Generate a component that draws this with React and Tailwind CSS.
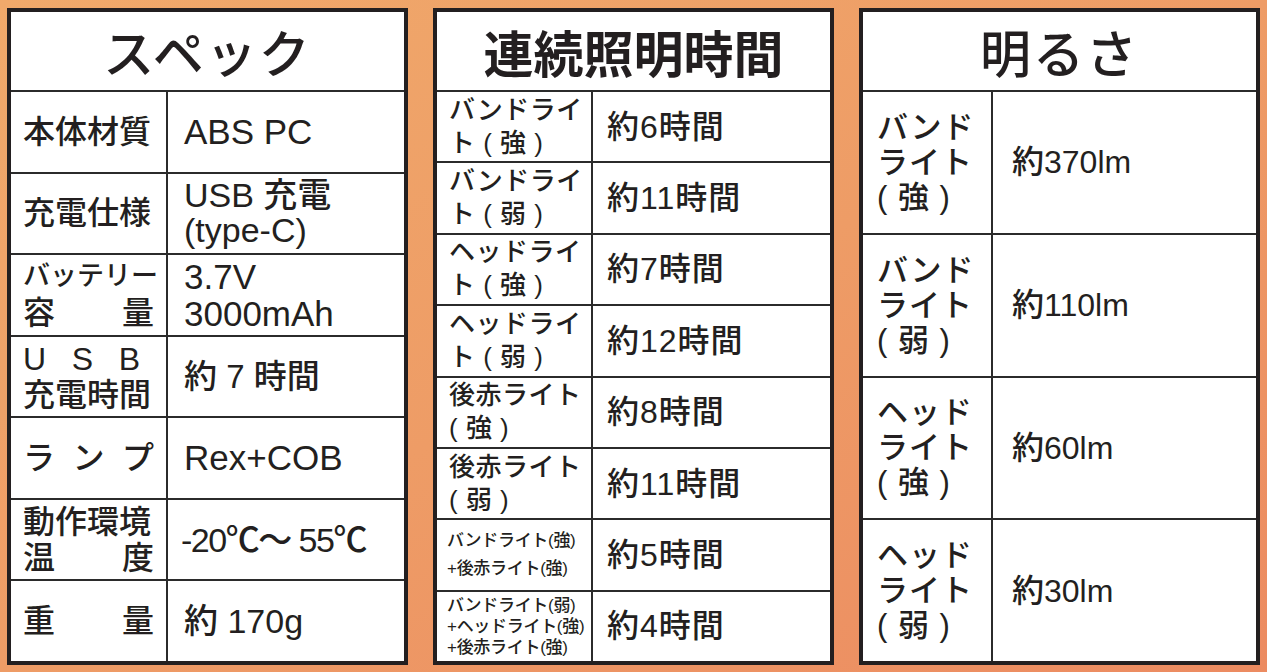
import React from 'react';

const ink = 'text-[#231f20]';
const font = "font-['Liberation_Sans','Noto_Sans_CJK_JP',sans-serif]";

// spreads each character over the full line width
const Spread = ({ text, className = '' }) => (
    <div className={`flex justify-between ${className}`}>
        {text.split('').map((c, i) => (
            <span key={i}>{c}</span>
        ))}
    </div>
);

const Table = ({ title, titleClass, children }) => (
    <div className="flex-1 flex flex-col border-4 border-[#231f20] bg-white">
        <div className={`h-[80px] shrink-0 flex items-center justify-center border-b-2 border-[#2b2b2b] font-['Noto_Sans_CJK_JP',sans-serif] ${titleClass}`}>
            {title}
        </div>
        <div className="flex-1 flex flex-col divide-y-2 divide-[#2b2b2b]">{children}</div>
    </div>
);

const Row = ({ labelW, label, value, valuePad = 'pl-4' }) => (
    <div className="flex flex-1 basis-0 min-h-0">
        <div className={`${labelW} shrink-0 border-r-2 border-[#2b2b2b] flex flex-col justify-center`}>{label}</div>
        <div className={`flex-1 flex flex-col justify-center ${valuePad}`}>{value}</div>
    </div>
);

const specRows = [
    {
        label: <div className="px-[12px] text-[32px] leading-[36px]">本体材質</div>,
        value: <div className="text-[35px] leading-[36px]">ABS PC</div>,
    },
    {
        label: <div className="px-[12px] text-[32px] leading-[36px]">充電仕様</div>,
        value: (
            <div className="text-[34px] leading-[35px]">
                <div>USB 充電</div>
                <div>(type-C)</div>
            </div>
        ),
    },
    {
        label: (
            <div className="px-[12px] leading-[37px]">
                <Spread text="バッテリー" className="text-[27px]" />
                <Spread text="容量" className="text-[32px]" />
            </div>
        ),
        value: (
            <div className="text-[35px] leading-[37px]">
                <div>3.7V</div>
                <div>3000mAh</div>
            </div>
        ),
    },
    {
        label: (
            <div className="px-[12px] leading-[36px]">
                <Spread text="USB" className="text-[32px] pr-[14px]" />
                <div className="text-[32px]">充電時間</div>
            </div>
        ),
        value: <div className="text-[33px] leading-[36px]">約 7 時間</div>,
    },
    {
        label: (
            <div className="px-[12px]">
                <Spread text="ランプ" className="text-[32px] leading-[36px]" />
            </div>
        ),
        value: <div className="text-[35px] leading-[36px]">Rex+COB</div>,
    },
    {
        label: (
            <div className="px-[12px] leading-[36px] text-[32px]">
                <div>動作環境</div>
                <Spread text="温度" />
            </div>
        ),
        value: <div className="text-[34px] leading-[36px] whitespace-nowrap tracking-[-1.5px] -ml-[3px]">-20℃～ 55℃</div>,
    },
    {
        label: (
            <div className="px-[12px]">
                <Spread text="重量" className="text-[32px] leading-[36px]" />
            </div>
        ),
        value: <div className="text-[34px] leading-[36px]">約 170g</div>,
    },
];

const timeRows = [
    { l: ['バンドライ', 'ト ( 強 )'], v: '約6時間' },
    { l: ['バンドライ', 'ト ( 弱 )'], v: '約11時間' },
    { l: ['ヘッドライ', 'ト ( 強 )'], v: '約7時間' },
    { l: ['ヘッドライ', 'ト ( 弱 )'], v: '約12時間' },
    { l: ['後赤ライト', '( 強 )'], v: '約8時間' },
    { l: ['後赤ライト', '( 弱 )'], v: '約11時間' },
    { l: ['バンドライト(強)', '+後赤ライト(強)'], v: '約5時間', small: 'leading-[28px]' },
    { l: ['バンドライト(弱)', '+ヘッドライト(強)', '+後赤ライト(強)'], v: '約4時間', small: 'leading-[21px]' },
];

const lumenRows = [
    { l: ['バンド', 'ライト', '( 強 )'], v: '約370lm' },
    { l: ['バンド', 'ライト', '( 弱 )'], v: '約110lm' },
    { l: ['ヘッド', 'ライト', '( 強 )'], v: '約60lm' },
    { l: ['ヘッド', 'ライト', '( 弱 )'], v: '約30lm' },
];

const App = () => {
    return (
        <div className={`w-full h-[672px] flex gap-[25px] px-[7px] pt-[8px] pb-[7px] bg-gradient-to-br from-[#f0a96b] via-[#ee9c66] to-[#ec8b61] font-medium ${font} ${ink}`}>
            {/* Spec */}
            <Table title="スペック" titleClass="text-[51px] font-medium tracking-[2px]">
                {specRows.map((r, i) => (
                    <Row key={i} labelW="w-[157px]" label={r.label} value={r.value} />
                ))}
            </Table>

            {/* Continuous lighting time */}
            <Table title="連続照明時間" titleClass="text-[50px] font-bold">
                {timeRows.map((r, i) => (
                    <Row
                        key={i}
                        labelW="w-[156px]"
                        valuePad="pl-[14px]"
                        label={
                            r.small ? (
                                <div className={`pl-[10px] text-[17px] whitespace-nowrap tracking-[-0.3px] ${r.small}`}>
                                    {r.l.map((t, j) => <div key={j}>{t}</div>)}
                                </div>
                            ) : (
                                <div className="pl-[12px] text-[26px] leading-[33px] tracking-[0.5px] whitespace-nowrap">
                                    {r.l.map((t, j) => <div key={j}>{t}</div>)}
                                </div>
                            )
                        }
                        value={<div className="text-[32px] leading-[36px] tracking-[1px]">{r.v}</div>}
                    />
                ))}
            </Table>

            {/* Brightness */}
            <Table title="明るさ" titleClass="text-[51px] font-medium tracking-[2px]">
                {lumenRows.map((r, i) => (
                    <Row
                        key={i}
                        labelW="w-[130px]"
                        valuePad="pl-[19px]"
                        label={
                            <div className="pl-[14px] text-[31px] leading-[35px] tracking-[1px] whitespace-nowrap">
                                {r.l.map((t, j) => <div key={j}>{t}</div>)}
                            </div>
                        }
                        value={<div className="text-[32px] leading-[36px]">{r.v}</div>}
                    />
                ))}
            </Table>
        </div>
    );
};

export default App;
